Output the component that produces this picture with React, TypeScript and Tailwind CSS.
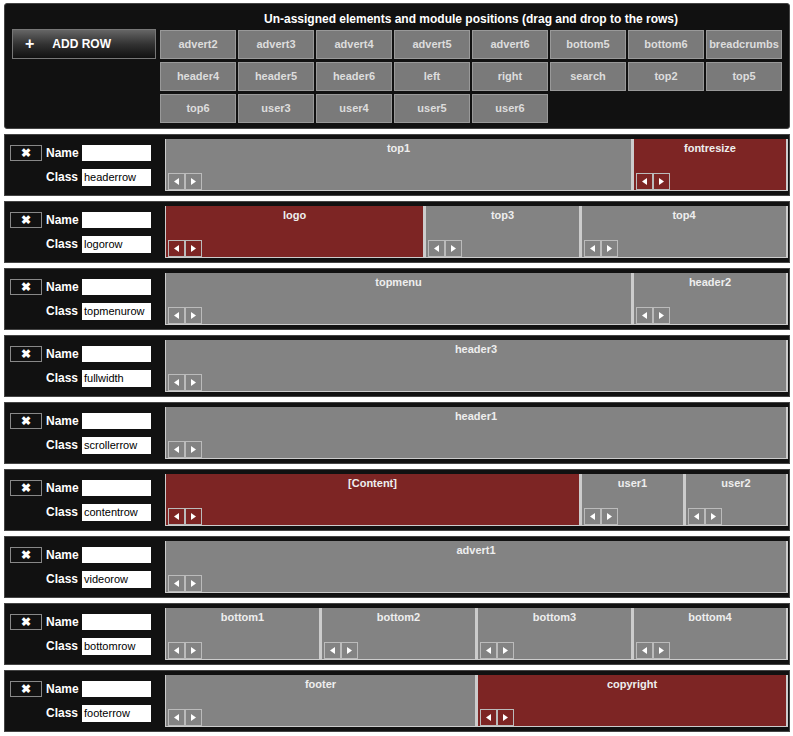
import React from "react";

const pool = ["advert2","advert3","advert4","advert5","advert6","bottom5","bottom6","breadcrumbs","header4","header5","header6","left","right","search","top2","top5","top6","user3","user4","user5","user6"];

type Cell = { n: string; w: number; red?: boolean };
const rows: { cls: string; cells: Cell[] }[] = [
  { cls: "headerrow", cells: [{ n: "top1", w: 468 }, { n: "fontresize", w: 155, red: true }] },
  { cls: "logorow", cells: [{ n: "logo", w: 260, red: true }, { n: "top3", w: 156 }, { n: "top4", w: 207 }] },
  { cls: "topmenurow", cells: [{ n: "topmenu", w: 468 }, { n: "header2", w: 155 }] },
  { cls: "fullwidth", cells: [{ n: "header3", w: 623 }] },
  { cls: "scrollerrow", cells: [{ n: "header1", w: 623 }] },
  { cls: "contentrow", cells: [{ n: "[Content]", w: 416, red: true }, { n: "user1", w: 104 }, { n: "user2", w: 103 }] },
  { cls: "videorow", cells: [{ n: "advert1", w: 623 }] },
  { cls: "bottomrow", cells: [{ n: "bottom1", w: 156 }, { n: "bottom2", w: 156 }, { n: "bottom3", w: 156 }, { n: "bottom4", w: 155 }] },
  { cls: "footerrow", cells: [{ n: "footer", w: 312 }, { n: "copyright", w: 311, red: true }] },
];

const Arrow = ({ dir }: { dir: "l" | "r" }) => (
  <div className="w-[17px] h-[17px] border border-[#bbb] flex items-center justify-center">
    <svg width="5" height="7" viewBox="0 0 5 7">
      {dir === "l" ? <path d="M5 0L0 3.5 5 7z" fill="#fff" /> : <path d="M0 0l5 3.5L0 7z" fill="#fff" />}
    </svg>
  </div>
);

export default function App() {
  return (
    <div className="w-[793px] h-[736px] bg-white pt-[3px] pl-[4px]" style={{ fontFamily: "Helvetica, 'Liberation Sans', Arial, sans-serif" }}>
      <div className="w-[786px] h-[126px] bg-[#111] rounded-[3px] border border-[#444] flex pl-[7px]">
        <div className="pt-[25px]">
          <div className="w-[144px] h-[30px] border border-[#777] flex items-center text-white font-bold text-[12px] bg-gradient-to-b from-[#666] via-[#333] to-[#111]">
            <span className="ml-[12px] mr-[18px] text-[16px] leading-none">+</span>ADD ROW
          </div>
        </div>
        <div className="ml-[4px] flex flex-col">
          <div className="h-[26px] text-white font-bold text-[12px] text-center pt-[6px]">Un-assigned elements and module positions (drag and drop to the rows)</div>
          <div className="grid grid-cols-[repeat(8,76px)] gap-x-[2px] gap-y-[3px]">
            {pool.map((p) => (
              <div key={p} className="h-[29px] bg-[#7a7a7a] border border-[#999] text-[#ddd] text-[11px] font-bold flex items-center justify-center">{p}</div>
            ))}
          </div>
        </div>
      </div>
      <div className="flex flex-col gap-[5px] mt-[5px]">
        {rows.map((r) => (
          <div key={r.cls} className="w-[786px] h-[62px] bg-[#111] border border-[#444] flex items-center pl-[5px]">
            <div className="w-[151px] flex flex-col gap-[6px] text-white font-bold text-[12px]">
              <div className="flex items-center">
                <div className="w-[32px] h-[16px] border border-[#888] flex items-center justify-center text-[12px]">✖</div>
                <span className="ml-[4px] w-[36px]">Name</span>
                <div className="w-[69px] h-[16px] bg-white" />
              </div>
              <div className="flex items-center">
                <span className="ml-[36px] w-[36px]">Class</span>
                <div className="w-[69px] h-[17px] bg-white text-black font-normal text-[11px] px-[2px] leading-[17px]">{r.cls}</div>
              </div>
            </div>
            <div className="flex h-[52px] ml-[4px]">
              {r.cells.map((c) => (
                <div key={c.n} style={{ width: c.w }} className={`h-full border-r-2 border-b border-l border-[#ccc] flex flex-col justify-between ${c.red ? "bg-[#7d2524]" : "bg-[#838383]"}`}>
                  <div className="text-center text-[#eee] text-[11px] font-bold pt-[1px]">{c.n}</div>
                  <div className="flex ml-[2px]"><Arrow dir="l" /><Arrow dir="r" /></div>
                </div>
              ))}
            </div>
          </div>
        ))}
      </div>
    </div>
  );
}
